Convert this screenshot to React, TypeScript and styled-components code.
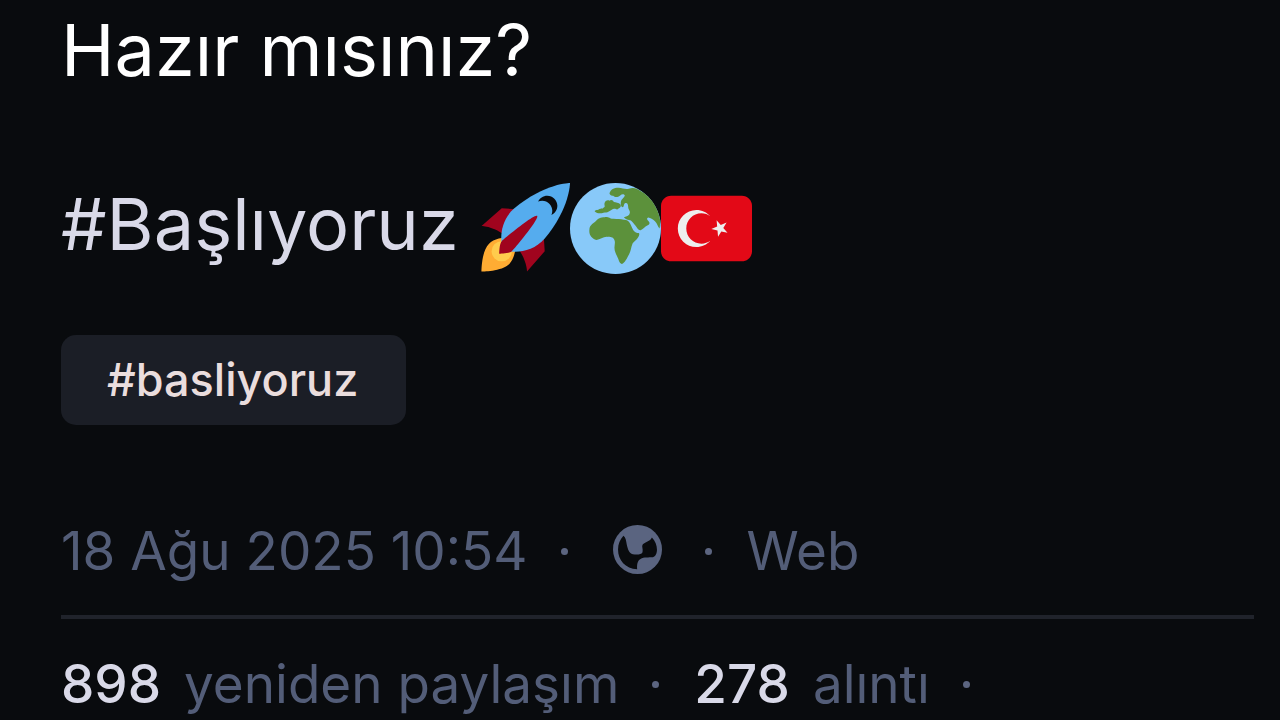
import React from "react";
import styled, { createGlobalStyle } from "styled-components";

const GlobalStyle = createGlobalStyle`
  body {
    margin: 0;
    background: #090b0e;
    font-family: Inter, "Liberation Sans", sans-serif;
    overflow: hidden;
  }
`;

const Post = styled.article`
  padding: 6px 26px 0 61px;
`;

const Line = styled.p`
  margin: 0 0 87px;
  color: #ffffff;
  font-size: 72px;
  line-height: 87px;
`;

const TagLine = styled.div`
  display: flex;
  align-items: flex-start;
  gap: 20px;
  font-size: 72px;
  line-height: 87px;
`;

const HashLink = styled.a`
  color: #d9d9e8;
  text-decoration: none;
`;

const EmojiGroup = styled.span`
  display: flex;
  padding-top: 3px;
`;

const Emoji = styled.svg`
  display: block;
  width: 91px;
  height: 91px;
`;

const Chip = styled.a`
  display: inline-block;
  margin-top: 61px;
  padding: 0 48px 0 46px;
  border-radius: 15px;
  background: #1b1e26;
  color: #eadddd;
  font-size: 45px;
  font-weight: 500;
  line-height: 90px;
  text-decoration: none;
`;

const Meta = styled.div`
  display: flex;
  align-items: center;
  margin-top: 94px;
  padding-bottom: 32px;
  border-bottom: 4px solid #20232b;
  color: #535d78;
  font-size: 53px;
  line-height: 64px;
`;

const Dot = styled.span`
  width: 7px;
  height: 7px;
  margin: 0 35px 0 33px;
  border-radius: 50%;
  background: #5c6580;
`;

const GlobeIcon = styled.svg`
  display: block;
  width: 49px;
  height: 49px;
  margin: 0 10px 4px;
`;

const Stats = styled(Meta)`
  margin-top: 33px;
  padding: 0;
  border: 0;
`;

const Stat = styled.a`
  display: flex;
  gap: 23px;
  color: inherit;
  text-decoration: none;
`;

const Count = styled.strong`
  color: #d9d9e8;
  font-weight: 500;
`;

function Rocket() {
  return (
    <Emoji viewBox="0 0 36 36" role="img" aria-label="roket">
      <path fill="#A0041E" d="M1 17l8-7 16 1 1 16-7 8s.001-5.999-6-12-12-6-12-6z" />
      <path fill="#FFAC33" d="M.973 35s-.036-7.979 2.985-11S15 21.187 15 21.187 14.999 29 11.999 32c-3 3-11.026 3-11.026 3z" />
      <circle fill="#FFCC4D" cx="8.999" cy="27" r="4" />
      <path fill="#55ACEE" d="M35.999 0s-10 0-22 10c-6 5-6 14-4 16s11 2 16-4c10-12 10-22 10-22z" />
      <path fill="#090b0e" d="M26.999 5c-1.623 0-3.013.971-3.641 2.36.502-.227 1.055-.36 1.641-.36 2.209 0 4 1.791 4 4 0 .586-.133 1.139-.359 1.64 1.389-.627 2.359-2.017 2.359-3.64 0-2.209-1.791-4-4-4z" />
      <path fill="#A0041E" d="M8 28s0-4 1-5 13.001-10.999 14-10-9.001 13-10.001 14S8 28 8 28z" />
    </Emoji>
  );
}

function Earth() {
  return (
    <Emoji viewBox="29 39 272 272" role="img" aria-label="dünya">
      <circle cx="165" cy="175" r="136" fill="#88C9F9" />
      <g fill="#5C913B">
        <path d="M147 70 C151 58 160 53 174 53 C186 53 193 59 205 56 C214 53 222 54 228 56 C265 73 292 107 299 153 L297 175 C291 169 290 160 283 153 C276 147 270 143 263 142 C258 143 258 149 264 153 C269 158 267 163 260 166 C253 169 247 178 240 180 C233 181 230 174 225 167 C220 160 215 155 211 151 C203 149 194 147 190 141 C200 139 207 136 208 128 C209 121 203 118 203 112 C203 104 201 98 195 99 C189 101 191 108 188 111 C182 113 180 103 181 95 C182 87 190 84 193 77 C190 70 184 72 179 76 C171 83 163 82 158 77 C153 78 148 76 147 70 Z" />
        <path d="M132 100 C134 92 141 89 147 92 C152 88 158 91 160 96 C166 97 174 98 180 103 C183 109 179 113 173 116 C169 121 165 114 160 116 C154 118 151 122 145 124 C139 129 135 126 129 128 C120 131 109 130 103 124 C104 119 112 121 117 117 C122 114 125 117 129 113 C136 109 131 106 132 100 Z" />
        <path d="M87 179 C87 165 98 160 105 154 C113 144 120 141 133 141 C147 140 148 147 159 146 C171 147 179 147 190 149 C200 149 205 153 209 161 C214 171 217 183 226 187 C233 190 237 187 236 193 C235 204 222 212 216 220 C211 231 212 240 206 251 C200 263 193 278 184 281 C176 280 175 268 170 259 C166 249 162 243 162 234 C161 225 166 217 161 208 C156 199 151 202 140 200 C129 199 119 209 108 209 C94 205 85 193 87 179 Z" />
      </g>
    </Emoji>
  );
}

function TurkishFlag() {
  return (
    <Emoji viewBox="0 0 36 36" role="img" aria-label="Türkiye bayrağı">
      <path fill="#E30917" d="M36 27c0 2.209-1.791 4-4 4H4c-2.209 0-4-1.791-4-4V9c0-2.209 1.791-4 4-4h28c2.209 0 4 1.791 4 4v18z" />
      <path fill="#EEE" d="M16 24c-3.314 0-6-2.685-6-6 0-3.314 2.686-6 6-6 1.31 0 2.52.425 3.507 1.138-1.348-1.524-3.312-2.491-5.507-2.491-4.061 0-7.353 3.292-7.353 7.353 0 4.062 3.292 7.354 7.353 7.354 2.195 0 4.16-.967 5.507-2.492C18.521 23.575 17.312 24 16 24zm3.913-5.77l2.44.562.22 2.493 1.288-2.146 2.44.561-1.644-1.888 1.287-2.147-2.303.98-1.644-1.889.22 2.494z" />
    </Emoji>
  );
}

function Globe() {
  return (
    <GlobeIcon viewBox="188 44 146 146" role="img" aria-label="Herkese açık">
      <circle cx="261" cy="117" r="73" fill="#5a6480" />
      <path
        fill="#090b0e"
        d="M219 76 C226 81 227 91 229 102 C232 116 236 128 247 131 C259 133 272 133 276 125 C278 115 273 108 276 103 C283 94 299 93 304 81 C314 91 319 104 319 118 C319 129 315 138 307 140 C294 141 280 139 270 145 C260 151 259 163 260 176 C225 174 203 149 203 117 C203 101 209 87 219 76 Z"
      />
    </GlobeIcon>
  );
}

export default function App() {
  return (
    <>
      <GlobalStyle />
      <Post>
        <Line>Hazır mısınız?</Line>
        <TagLine>
          <HashLink href="#basliyoruz">#Başlıyoruz</HashLink>
          <EmojiGroup>
            <Rocket />
            <Earth />
            <TurkishFlag />
          </EmojiGroup>
        </TagLine>
        <Chip href="#basliyoruz">#basliyoruz</Chip>
        <Meta>
          <time dateTime="2025-08-18T10:54">18 Ağu 2025 10:54</time>
          <Dot />
          <Globe />
          <Dot />
          <span>Web</span>
        </Meta>
        <Stats>
          <Stat href="#reblogs">
            <Count>898</Count>
            <span>yeniden paylaşım</span>
          </Stat>
          <Dot />
          <Stat href="#quotes">
            <Count>278</Count>
            <span>alıntı</span>
          </Stat>
          <Dot />
        </Stats>
      </Post>
    </>
  );
}
